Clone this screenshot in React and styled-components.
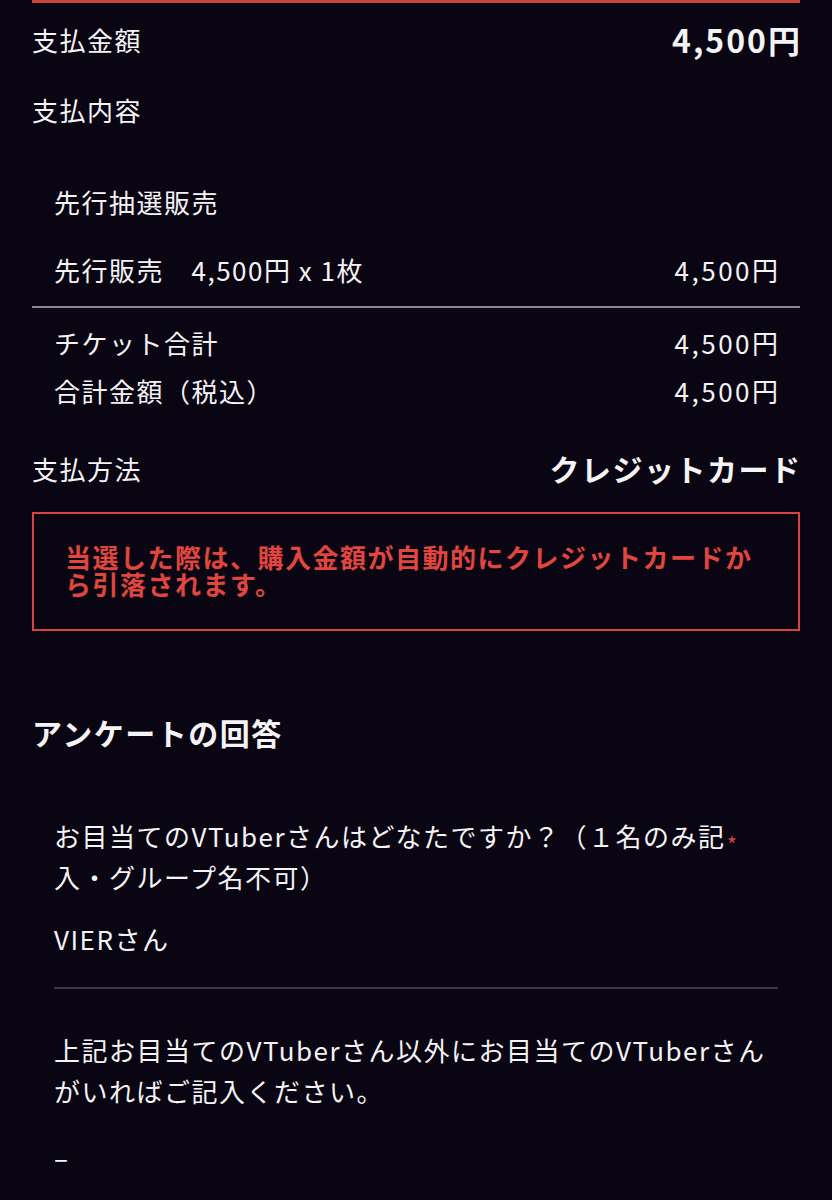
import React from 'react';
import styled, { createGlobalStyle } from 'styled-components';

const GlobalStyle = createGlobalStyle`
  html, body {
    margin: 0;
    padding: 0;
    background: #0a0512;
  }
  body {
    font-family: "Noto Sans CJK JP", "Noto Sans", sans-serif;
    color: #f4f3f6;
  }
`;

const Page = styled.div`
  width: 832px;
  min-height: 1200px;
  box-sizing: border-box;
  padding: 0 32px;
  background: #0a0512;
`;

const TopRule = styled.div`
  height: 3px;
  background: #cc4440;
`;

const Row = styled.div`
  display: flex;
  align-items: center;
  justify-content: space-between;
  height: ${p => p.h || 68}px;
  margin-top: ${p => p.mt || 0}px;
  padding: 0 ${p => (p.inset ? 22 : 0)}px;
  font-size: 26px;
`;

const Value = styled.span`
  font-size: ${p => p.size || 26}px;
  font-weight: ${p => (p.bold ? 700 : 400)};
  letter-spacing: ${p => p.ls ?? 2.5}px;
  margin-right: -${p => p.ls ?? 2.5}px;
`;

const Label = styled.span`
  letter-spacing: 1.5px;
  white-space: pre;
`;

const Divider = styled.div`
  height: 2px;
  background: ${p => p.color};
  margin: ${p => p.m};
`;

const Notice = styled.div`
  margin-top: 10px;
  border: 2px solid #d4463f;
  padding: 29px 31px 32px;
  color: #e0463d;
  font-size: 26px;
  font-weight: 700;
  line-height: 27px;
  letter-spacing: 1.5px;
`;

const Heading = styled.h2`
  margin: 81px 0 0;
  height: 40px;
  line-height: 40px;
  font-size: 30px;
  font-weight: 700;
  letter-spacing: 1.5px;
`;

const Answers = styled.div`
  padding: 0 22px;
  margin-top: 63px;
`;

const Question = styled.div`
  position: relative;
  width: ${p => p.w || 'auto'};
  margin-top: ${p => p.mt || 0}px;
  font-size: 26px;
  line-height: 41px;
  letter-spacing: 1.5px;
`;

const Required = styled.span`
  position: absolute;
  left: 673px;
  top: 9px;
  color: #d9443c;
  font-size: 21px;
`;

const Answer = styled.div`
  margin-top: ${p => p.mt}px;
  font-size: 26px;
  line-height: 41px;
  letter-spacing: 1.5px;
`;

export default function App() {
  return (
    <>
      <GlobalStyle />
      <Page>
        <TopRule />
        <Row h={72}>
          <Label>支払金額</Label>
          <Value bold size={32} ls={2}>4,500円</Value>
        </Row>
        <Row h={68}>
          <Label>支払内容</Label>
        </Row>
        <Row h={68} mt={24} inset>
          <Label>先行抽選販売</Label>
        </Row>
        <Row h={68} inset>
          <Label>先行販売　4,500円 x 1枚</Label>
          <Value>4,500円</Value>
        </Row>
        <Divider color="#8b8692" m="3px 0 0" />
        <Row h={48} mt={10} inset>
          <Label>チケット合計</Label>
          <Value>4,500円</Value>
        </Row>
        <Row h={48} inset>
          <Label>合計金額（税込）</Label>
          <Value>4,500円</Value>
        </Row>
        <Row h={68} mt={20}>
          <Label>支払方法</Label>
          <Value bold size={30} ls={1.5}>クレジットカード</Value>
        </Row>
        <Notice>当選した際は、購入金額が自動的にクレジットカードから引落されます。</Notice>
        <Heading>アンケートの回答</Heading>
        <Answers>
          <Question w="690px">
            お目当てのVTuberさんはどなたですか？（１名のみ記入・グループ名不可）
            <Required>*</Required>
          </Question>
          <Answer mt={21}>VIERさん</Answer>
          <Divider color="#3d3845" m="28px 0 0" />
          <Question mt={40}>
            上記お目当てのVTuberさん以外にお目当てのVTuberさんがいればご記入ください。
          </Question>
          <Answer mt={25}>–</Answer>
        </Answers>
      </Page>
    </>
  );
}
